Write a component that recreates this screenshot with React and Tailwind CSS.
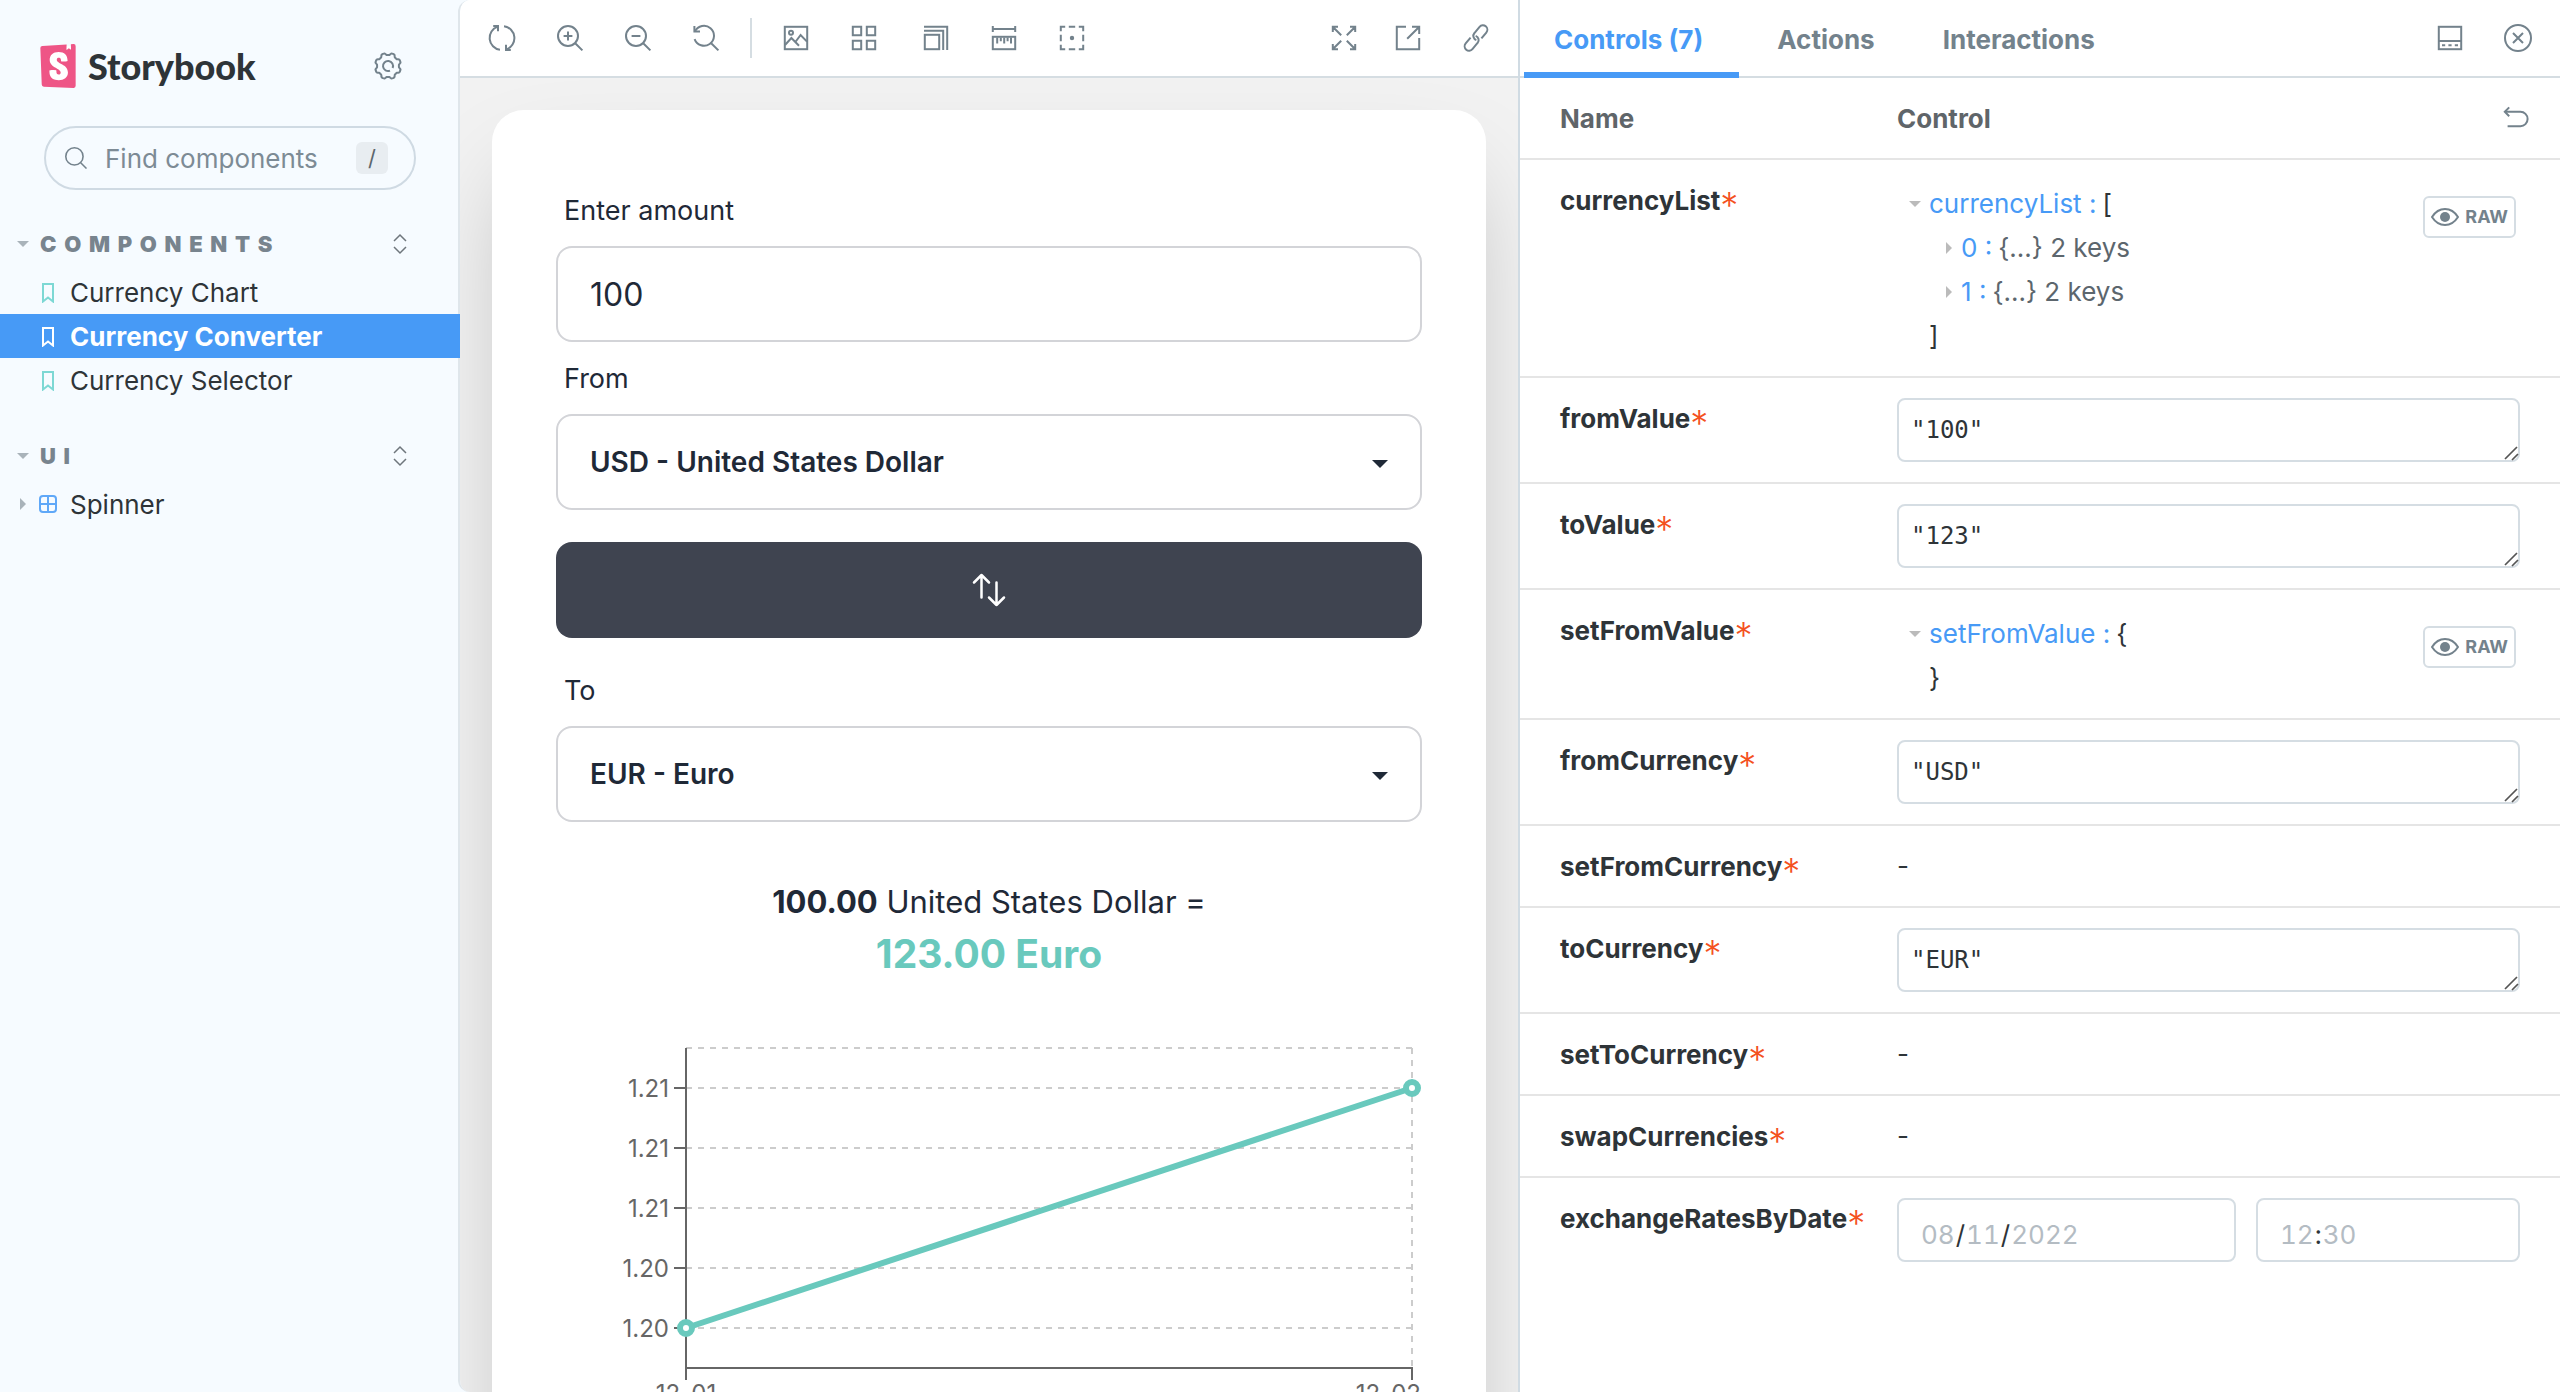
import React from "react";
import { SiStorybook } from "react-icons/si";

const GEAR = Array.from({ length: 97 }, (_, i) => {
  const a = (i / 96) * Math.PI * 2;
  const r = 6 - 0.55 * Math.tanh(2.5 * Math.cos(8 * a));
  return `${i ? "L" : "M"}${(7 + r * Math.sin(a)).toFixed(2)} ${(7 - r * Math.cos(a)).toFixed(2)}`;
}).join("");

const ICONS = {
  sync: (<><path d="M2.6 1H5v2.6" /><path d="M4.8 1.3A6 6 0 0 0 6 12.9" /><path d="M11.4 13H9v-2.6" /><path d="M9.2 12.7A6 6 0 0 0 8 1.1" /></>),
  zoomIn: (<><circle cx="6" cy="6" r="5" /><path d="M9.6 9.6L13.2 13.2M6 3.8v4.4M3.8 6h4.4" /></>),
  zoomOut: (<><circle cx="6" cy="6" r="5" /><path d="M9.6 9.6L13.2 13.2M3.8 6h4.4" /></>),
  zoomReset: (<><path d="M1.2 1v2.8H4" /><path d="M1.5 3.7A5 5 0 1 1 1.3 7.6" /><path d="M9.6 9.6L13.2 13.2" /></>),
  photo: (<><rect x="1.4" y="1.4" width="11.2" height="11.2" /><circle cx="4.5" cy="4.4" r="1" /><path d="M1.5 10.5L4.7 7l3.8 3.9M6.7 9L9.3 5.5l3.2 3.3" /></>),
  grid: (<path d="M1.4 1.4h4.2v4.2H1.4zM8.4 1.4h4.2v4.2H8.4zM1.4 8.4h4.2v4.2H1.4zM8.4 8.4h4.2v4.2H8.4z" />),
  grow: (<><rect x="1.4" y="5.4" width="7.2" height="7.2" /><path d="M1 3.4h9.6V13M1 1.4h11.6V13" /></>),
  ruler: (<><path d="M1.4 1v3M12.6 1v3M1.4 2.5h11.2" /><rect x="1.4" y="6.4" width="11.2" height="6.2" /><path d="M3.6 6.8v3M5.4 6.8v1.8M7.1 6.8v3M8.8 6.8v1.8M10.5 6.8v3" /></>),
  outline: (<><path d="M1.4 3.6V1.4h2.2M10.4 1.4h2.2v2.2M12.6 10.4v2.2h-2.2M3.6 12.6H1.4v-2.2M5.4 1.4h3.2M5.4 12.6h3.2M1.4 5.4v3.2M12.6 5.4v3.2" /><circle cx="7" cy="7" r=".6" fill="currentColor" /></>),
  expand: (<path d="M1.4 4V1.4H4M1.6 1.6l4 4M10 1.4h2.6V4M12.4 1.6l-4 4M1.4 10v2.6H4M1.6 12.4l4-4M12.6 10v2.6H10M12.4 12.4l-4-4" />),
  share: (<><path d="M6 1.4H1.4v11.2h11.2V7" /><path d="M9 1.4h3.6V5M12.4 1.6L6.6 7.4" /></>),
  link: (<g transform="rotate(-50 7 7)"><path d="M8.600 9.200H12.400a2.200 2.200 0 0 0 0-4.400H8.400A2.200 2.200 0 0 0 6.300 7.800" /><path d="M5.400 4.800H1.600a2.200 2.200 0 0 0 0 4.400H5.600A2.200 2.200 0 0 0 7.700 6.200" /></g>),
  bottombar: (<><rect x="1.400" y="1.400" width="11.200" height="11.200" /><path d="M1.400 8.500h11.200M3 10.600h1.600M6.200 10.600h1.600M9.400 10.600H11" /></>),
  close: (<><circle cx="7" cy="7" r="6.500" /><path d="M4.500 4.500l5 5M9.500 4.500l-5 5" /></>),
  undo: (<><path d="M3.600 1.200L1.400 3.400l2.200 2.200" /><path d="M1.600 3.400h7.600a3.600 3.600 0 0 1 0 7.200H2.800" /></>),
  search: (<><circle cx="6" cy="6" r="5.500" /><path d="M10 10L13.700 13.700" /></>),
  cog: (<><path d={`${GEAR}Z`} strokeLinejoin="round" /><path d="M8 9.300A2.500 2.500 0 1 1 9.300 8" /></>),
};

function Icon({ name, className = "size-7" }) {
  return (
    <svg viewBox="0 0 14 14" fill="none" stroke="currentColor" strokeWidth="1" className={className} aria-hidden="true">
      {ICONS[name]}
    </svg>
  );
}

function IconButton({ name, label }) {
  return (
    <button type="button" aria-label={label} className="size-7 shrink-0 text-[#73828c]">
      <Icon name={name} />
    </button>
  );
}

function Caret({ open, className = "" }) {
  return (
    <svg viewBox="0 0 12 12" className={`size-3 shrink-0 ${className}`} fill="currentColor" aria-hidden="true">
      {open ? <path d="M0 3h12L6 9z" /> : <path d="M3 0l6 6-6 6z" />}
    </svg>
  );
}

function Heading({ children }) {
  return (
    <div className="flex h-7 items-center pr-[51px] pl-[17px]">
      <button type="button" className="flex flex-1 items-center gap-[11px] text-[22px] leading-7 font-black tracking-[0.35em] text-[#78848e] uppercase">
        <Caret open className="text-[#a9b3ba]" />
        {children}
      </button>
      <button type="button" aria-label="Expand all" className="text-[#6e767c]">
        <svg viewBox="0 0 14 22" className="h-[22px] w-[14px]" fill="none" stroke="currentColor" strokeWidth="1.500" aria-hidden="true">
          <path d="M1 8l6-6 6 6M1 14l6 6 6-6" />
        </svg>
      </button>
    </div>
  );
}

function Story({ children, selected }) {
  return (
    <a
      href="#story"
      aria-current={selected ? "page" : undefined}
      className={
        selected
          ? "relative z-10 -mr-0.5 flex h-11 items-center gap-4 bg-[#479af6] pl-[42px] font-bold text-white"
          : "flex h-11 items-center gap-4 pl-[42px] text-[#2e3438]"
      }
    >
      <svg viewBox="0 0 12 20" className={selected ? "mt-0.5 h-5 w-3" : "mt-0.5 h-5 w-3 text-[#7dd8d4]"} fill="none" stroke="currentColor" strokeWidth="2" aria-hidden="true">
        <path d="M1 1h10v17.500l-5-4-5 4z" />
      </svg>
      {children}
    </a>
  );
}

function Sidebar() {
  return (
    <nav className="flex w-[458px] shrink-0 flex-col bg-[#f6fbff] text-[26px]">
      <div className="mt-11 flex h-11 items-center justify-between pr-14 pl-9">
        <a href="#home" className="flex items-center gap-2 font-[Lato] text-[36px] leading-11 font-black text-[#2e3438]">
          <SiStorybook className="size-11 bg-[linear-gradient(#fff,#fff)] bg-[length:26px_40px] bg-center bg-no-repeat text-[#ee5586]" aria-hidden="true" />
          Storybook
        </a>
        <IconButton name="cog" label="Settings" />
      </div>
      <label className="mt-[38px] mr-[42px] ml-11 flex h-16 items-center rounded-full border-2 border-[#cfdae3] pr-[26px] pl-[19px] text-[#73828c]">
        <Icon name="search" className="size-[22px] shrink-0" />
        <input type="search" aria-label="Find components" placeholder="Find components" className="ml-[18px] w-0 flex-1 bg-transparent outline-none placeholder:text-[#7d8b95]" />
        <kbd className="grid size-8 place-items-center rounded-md bg-[#e8edf1] font-[Inter] text-[22px] text-[#5c666d]">/</kbd>
      </label>
      <div className="mt-10">
        <Heading>Components</Heading>
        <div className="mt-3">
          <Story>Currency Chart</Story>
          <Story selected>Currency Converter</Story>
          <Story>Currency Selector</Story>
        </div>
      </div>
      <div className="mt-10">
        <Heading>UI</Heading>
        <a href="#spinner" className="mt-3 flex h-11 items-center pl-[17px] text-[#2e3438]">
          <Caret className="text-[#a9b3ba]" />
          <svg viewBox="0 0 18 18" className="mr-[13px] ml-[10px] size-[18px]" fill="none" stroke="#5fa8f8" strokeWidth="2" aria-hidden="true">
            <rect x="1" y="1" width="16" height="16" rx="3" />
            <path d="M9 1v16M1 9h16" />
          </svg>
          Spinner
        </a>
      </div>
    </nav>
  );
}

function Toolbar() {
  return (
    <div className="flex h-[78px] shrink-0 items-center justify-between border-b-2 border-[#d5dde2] bg-white px-7">
      <div className="flex items-center gap-10">
        <IconButton name="sync" label="Remount component" />
        <IconButton name="zoomIn" label="Zoom in" />
        <IconButton name="zoomOut" label="Zoom out" />
        <IconButton name="zoomReset" label="Reset zoom" />
        <div className="-mx-[10px] h-10 w-0.5 bg-[#d5dde2]" />
        <IconButton name="photo" label="Change background" />
        <IconButton name="grid" label="Apply grid" />
        <div className="ml-1 flex gap-10">
          <IconButton name="grow" label="Change viewport size" />
          <IconButton name="ruler" label="Enable measure" />
          <IconButton name="outline" label="Apply outlines" />
        </div>
      </div>
      <div className="flex items-center gap-10">
        <div className="flex gap-9">
          <IconButton name="expand" label="Go full screen" />
          <IconButton name="share" label="Open canvas in new tab" />
        </div>
        <IconButton name="link" label="Copy canvas link" />
      </div>
    </div>
  );
}

function CurrencySelect({ id, label, options }) {
  return (
    <>
      <label htmlFor={id} className="flex h-[72px] items-center px-2 pt-0.5 text-[27px]">{label}</label>
      <div className="relative">
        <select id={id} className="h-24 w-full appearance-none rounded-2xl border-2 border-[#d3d4d8] bg-white px-8 text-[28px] font-semibold">
          {options.map((o) => <option key={o}>{o}</option>)}
        </select>
        <svg viewBox="0 0 16 8" className="pointer-events-none absolute top-[46px] right-[34px] h-2 w-4" fill="#1f2937" aria-hidden="true">
          <path d="M0 0h16L8 8z" />
        </svg>
      </div>
    </>
  );
}

const TICKS = [
  { y: 46, label: "1.21" },
  { y: 106, label: "1.21" },
  { y: 166, label: "1.21" },
  { y: 226, label: "1.20" },
  { y: 286, label: "1.20" },
];

function RateChart() {
  return (
    <svg viewBox="0 0 866 400" className="mt-[62px] w-full" role="img" aria-label="Exchange rate by date" fontSize="24" fill="#666">
      <g stroke="#ccc" strokeWidth="2" strokeDasharray="6 6">
        <path d="M130 6H856M856 6V326" />
        {TICKS.map((t) => <path key={t.y} d={`M130 ${t.y}H856`} />)}
      </g>
      <g stroke="#666" strokeWidth="2" fill="none">
        <path d="M130 6V338M130 326H856V338" />
        {TICKS.map((t) => <path key={t.y} d={`M118 ${t.y}H130`} />)}
      </g>
      {TICKS.map((t) => <text key={t.y} x="113" y={t.y + 9} textAnchor="end">{t.label}</text>)}
      <text x="130" y="360" textAnchor="middle">12-01</text>
      <text x="865" y="360" textAnchor="end">12-02</text>
      <path d="M130 286L856 46" stroke="#69c9bd" strokeWidth="6" />
      <g fill="#fff" stroke="#69c9bd" strokeWidth="6">
        <circle cx="130" cy="286" r="6" />
        <circle cx="856" cy="46" r="6" />
      </g>
    </svg>
  );
}

function Preview() {
  return (
    <div className="flex-1 overflow-hidden bg-[#f2f2f2] px-8 pt-8">
      <div className="rounded-[32px] bg-white p-16 text-[#1f2937] shadow-[0_50px_100px_-24px_rgba(0,0,0,0.25)]">
        <label htmlFor="amount" className="flex h-[72px] items-center px-2 pt-0.5 text-[27px]">Enter amount</label>
        <input id="amount" type="text" defaultValue="100" className="h-24 w-full rounded-2xl border-2 border-[#d3d4d8] px-8 text-[32px]" />
        <CurrencySelect id="from" label="From" options={["USD - United States Dollar", "EUR - Euro"]} />
        <button type="button" aria-label="Swap currencies" className="mt-8 mb-4 grid h-24 w-full place-items-center rounded-2xl bg-[#3f4450] text-white">
          <svg viewBox="0 0 24 24" className="size-10" fill="none" stroke="currentColor" strokeWidth="1.500" strokeLinecap="round" strokeLinejoin="round" aria-hidden="true">
            <path d="M3 7.500L7.500 3m0 0L12 7.500M7.500 3v13.500m13.500 0L16.500 21m0 0L12 16.500m4.500 4.500V7.500" />
          </svg>
        </button>
        <CurrencySelect id="to" label="To" options={["EUR - Euro", "USD - United States Dollar"]} />
        <div className="mt-14 text-center">
          <p className="text-[31px] leading-12"><b className="font-bold">100.00</b> United States Dollar =</p>
          <p className="pt-0.5 text-[39px] leading-13 font-bold text-[#69c9bd]">123.00 Euro</p>
        </div>
        <RateChart />
      </div>
    </div>
  );
}

function JsonField({ label, value }) {
  return (
    <div className="relative">
      <textarea aria-label={label} rows={1} defaultValue={value} className="block h-16 w-full resize-none overflow-hidden rounded-lg border-2 border-[#d5dde3] px-3 py-[14px] font-['DejaVu_Sans_Mono'] text-[24px] leading-8" />
      <svg viewBox="0 0 16 16" className="pointer-events-none absolute right-0 bottom-0 size-4" fill="none" stroke="#555" strokeWidth="1.700" aria-hidden="true">
        <path d="M1 13L13 1M8 14l6-6" />
      </svg>
    </div>
  );
}

function RawButton() {
  return (
    <button type="button" className="mt-4 mr-1 flex h-[42px] items-center gap-[6px] rounded-md border-2 border-[#d5dde3] px-[6px] text-[18px] font-bold text-[#73828c]">
      <svg viewBox="0 0 28 20" className="h-5 w-7" fill="none" stroke="currentColor" strokeWidth="2" aria-hidden="true">
        <path d="M1 10C4.500 4.500 9 2 14 2S23.500 4.500 27 10c-3.500 5.500-8 8-13 8S4.500 15.500 1 10z" />
        <circle cx="14" cy="10" r="5" fill="currentColor" stroke="none" />
      </svg>
      RAW
    </button>
  );
}

function TreeEntry({ index }) {
  return (
    <li className="flex items-center pl-[46px]">
      <Caret className="mr-[6px] text-[#bbb]" />
      <span className="text-[#479af6]">{index} :</span>
      <span className="ml-[6px] text-[#5c666d]">{"{...} 2 keys"}</span>
    </li>
  );
}

function Tree({ name, open, close, children }) {
  return (
    <div className="flex items-start justify-between">
      <div className="-mb-0.5 pt-0.5 leading-11">
        <div className="flex items-center pl-3">
          <Caret open className="mr-2 text-[#bbb]" />
          <span className="text-[#479af6]">{name} :</span>
          <span className="ml-[6px]">{open}</span>
        </div>
        <ul>{children}</ul>
        <div className="pl-8">{close}</div>
      </div>
      <RawButton />
    </div>
  );
}

function Row({ name, children }) {
  return (
    <tr className="border-b-2 border-[#e5e5e5] align-top last:border-0">
      <th scope="row" className="pt-[21px] pb-[19px] pl-10 text-left leading-10 font-bold">
        {name}<span className="align-[-8px] text-[36px] leading-6 font-light text-[#f4511e]">*</span>
      </th>
      <td className="py-5 pr-10 leading-10">{children}</td>
    </tr>
  );
}

const FIELD =
  "h-16 rounded-lg border-2 border-[#d5dde3] px-[21px] pt-[10px] tabular-nums text-[#2e3438] [&::-webkit-calendar-picker-indicator]:hidden [&::-webkit-datetime-edit-ampm-field]:hidden [&::-webkit-datetime-edit-day-field]:text-[#b4bcc3] [&::-webkit-datetime-edit-hour-field]:text-[#b4bcc3] [&::-webkit-datetime-edit-minute-field]:text-[#b4bcc3] [&::-webkit-datetime-edit-month-field]:text-[#b4bcc3] [&::-webkit-datetime-edit-year-field]:text-[#b4bcc3]";

function Panel() {
  return (
    <aside className="flex w-[1042px] shrink-0 flex-col border-l-2 border-[#d0dbe3] bg-white text-[26px] text-[#2e3438]">
      <div className="flex h-[78px] shrink-0 items-center border-b-2 border-[#d5dde2] pr-7 pl-1 font-bold text-[#73828c]">
        <div role="tablist" className="flex flex-1 self-stretch">
          <button type="button" role="tab" aria-selected="true" className="-mb-0.5 border-b-6 border-[#479af6] pt-[6px] pr-9 pl-[30px] text-[#479af6]">Controls (7)</button>
          <button type="button" role="tab" aria-selected="false" className="pt-0.5 pr-[34px] pl-[38px]">Actions</button>
          <button type="button" role="tab" aria-selected="false" className="px-[34px] pt-0.5">Interactions</button>
        </div>
        <div className="flex gap-10">
          <IconButton name="bottombar" label="Change addon orientation" />
          <IconButton name="close" label="Hide addons" />
        </div>
      </div>
      <table className="w-full table-fixed border-collapse">
        <thead className="text-[#5f6569]">
          <tr className="border-b-2 border-[#e5e5e5]">
            <th className="w-[377px] pt-[21px] pb-[19px] pl-10 text-left leading-10 font-bold">Name</th>
            <th className="pt-[21px] pb-[19px] pr-[30px] text-left leading-10 font-bold">
              <div className="flex items-center justify-between">
                Control
                <IconButton name="undo" label="Reset controls" />
              </div>
            </th>
          </tr>
        </thead>
        <tbody>
          <Row name="currencyList">
            <Tree name="currencyList" open="[" close="]">
              <TreeEntry index={0} />
              <TreeEntry index={1} />
            </Tree>
          </Row>
          <Row name="fromValue"><JsonField label="fromValue" value={'"100"'} /></Row>
          <Row name="toValue"><JsonField label="toValue" value={'"123"'} /></Row>
          <Row name="setFromValue"><Tree name="setFromValue" open="{" close="}" /></Row>
          <Row name="fromCurrency"><JsonField label="fromCurrency" value={'"USD"'} /></Row>
          <Row name="setFromCurrency">-</Row>
          <Row name="toCurrency"><JsonField label="toCurrency" value={'"EUR"'} /></Row>
          <Row name="setToCurrency">-</Row>
          <Row name="swapCurrencies">-</Row>
          <Row name="exchangeRatesByDate">
            <div className="flex gap-5">
              <input type="date" aria-label="Date" defaultValue="2022-08-11" className={`${FIELD} w-[339px]`} />
              <input type="time" aria-label="Time" defaultValue="12:30" className={`${FIELD} min-w-0 flex-1`} />
            </div>
          </Row>
        </tbody>
      </table>
    </aside>
  );
}

export default function App() {
  return (
    <div className="flex h-screen overflow-hidden bg-[#f6fbff] font-[Inter,sans-serif]">
      <Sidebar />
      <main className="flex min-w-0 flex-1 flex-col overflow-hidden rounded-l-xl border-l-2 border-[#dfe6eb]">
        <Toolbar />
        <Preview />
      </main>
      <Panel />
    </div>
  );
}
